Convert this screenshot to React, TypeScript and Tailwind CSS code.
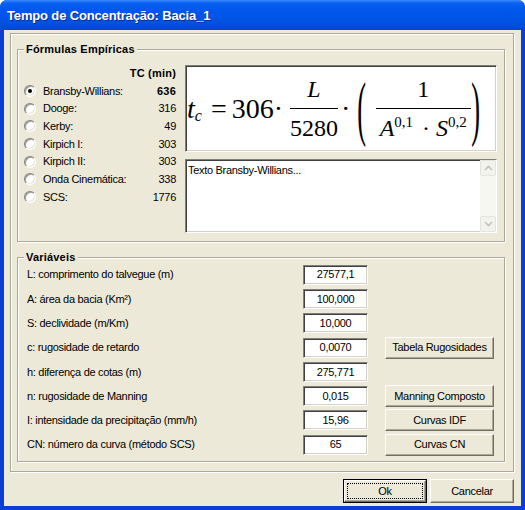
import type { ReactNode } from "react";

const formulas = [
  { name: "Bransby-Willians:", tc: "636", checked: true },
  { name: "Dooge:", tc: "316" },
  { name: "Kerby:", tc: "49" },
  { name: "Kirpich I:", tc: "303" },
  { name: "Kirpich II:", tc: "303" },
  { name: "Onda Cinemática:", tc: "338" },
  { name: "SCS:", tc: "1776" },
];

const variables = [
  { label: "L: comprimento do talvegue (m)", value: "27577,1" },
  { label: "A: área da bacia (Km²)", value: "100,000" },
  { label: "S: declividade (m/Km)", value: "10,000" },
  { label: "c: rugosidade de retardo", value: "0,0070", button: "Tabela Rugosidades" },
  { label: "h: diferença de cotas (m)", value: "275,771" },
  { label: "n: rugosidade de Manning", value: "0,015", button: "Manning Composto" },
  { label: "I: intensidade da precipitação (mm/h)", value: "15,96", button: "Curvas IDF" },
  { label: "CN: número da curva (método SCS)", value: "65", button: "Curvas CN" },
];

const sunken =
  "border border-[#808080] border-r-white border-b-white shadow-[inset_1px_1px_0_#404040,inset_-1px_-1px_0_#d4d0c8] bg-white";
const raised =
  "border border-white border-r-[#716f64] border-b-[#716f64] shadow-[inset_-1px_-1px_0_#aca899] bg-[#ece9d8]";

function GroupBox({ title, className, children }: { title: string; className: string; children: ReactNode }) {
  return (
    <div className={"relative border border-[#aca899] shadow-[inset_1px_1px_0_#fff,1px_1px_0_#fff] " + className}>
      <span className="absolute -top-[8px] left-[6px] bg-[#ece9d8] px-[2px] font-bold leading-[14px] tracking-[0.2px]">
        {title}
      </span>
      {children}
    </div>
  );
}

function Radio({ checked }: { checked?: boolean }) {
  return (
    <span className="flex h-[12px] w-[12px] shrink-0 items-center justify-center rounded-full border border-[#808080] border-r-white border-b-white bg-white shadow-[inset_1px_1px_0_#9d9d97,inset_-1px_-1px_0_#e6e3d6]">
      {checked && <span className="h-[4px] w-[4px] rounded-full bg-black" />}
    </span>
  );
}

function Fraction({ num, den, className }: { num: ReactNode; den: ReactNode; className?: string }) {
  return (
    <span className={"flex flex-col items-center " + (className ?? "")}>
      <span className="pb-[7px] text-[24px] leading-none">{num}</span>
      <span className="h-[1px] w-full bg-black" />
      <span className="pt-[7px] text-[24px] leading-none">{den}</span>
    </span>
  );
}

function Formula() {
  return (
    <div className="flex h-full items-center pl-[1px] font-['Liberation_Serif','Times_New_Roman',serif] tracking-normal text-black">
      <span className="text-[28px] italic leading-none">t</span>
      <span className="relative top-[7px] text-[16px] italic leading-none">c</span>
      <span className="ml-[9px] text-[28px] leading-none">=</span>
      <span className="ml-[5px] text-[28px] leading-none">306</span>
      <span className="text-[28px] leading-none">·</span>
      <Fraction className="ml-[7px]" num={<span className="italic">L</span>} den="5280" />
      <span className="ml-[3px] text-[28px] leading-none">·</span>
      <span className="ml-[8px] inline-block scale-x-[1.2] scale-y-[3.3] text-[22px] leading-none">(</span>
      <Fraction
        className="ml-[10px]"
        num="1"
        den={
          <span className="px-[4px]">
            <span className="italic">A</span>
            <span className="relative -top-[9px] text-[15px]">0,1</span>
            <span className="ml-[9px] mr-[6px]">·</span>
            <span className="italic">S</span>
            <span className="relative -top-[9px] text-[15px]">0,2</span>
          </span>
        }
      />
      <span className="ml-[1px] inline-block scale-x-[1.2] scale-y-[3.3] text-[22px] leading-none">)</span>
    </div>
  );
}

function Chevron({ up }: { up?: boolean }) {
  return (
    <svg width="9" height="6" viewBox="0 0 9 6">
      <path d={up ? "M1 5 L4.5 1.5 L8 5" : "M1 1 L4.5 4.5 L8 1"} fill="none" stroke="#c3c3bb" strokeWidth="1.6" />
    </svg>
  );
}

function ScrollBar() {
  return (
    <div className="flex w-[16px] flex-col justify-between bg-[#f7f7f2]">
      <div className="flex h-[16px] items-center justify-center rounded-[2px] border border-[#e4e3dc] bg-[#f3f3ee]">
        <Chevron up />
      </div>
      <div className="flex h-[16px] items-center justify-center rounded-[2px] border border-[#e4e3dc] bg-[#f3f3ee]">
        <Chevron />
      </div>
    </div>
  );
}

function Button({ children, className }: { children: ReactNode; className: string }) {
  return <div className={"flex items-center justify-center " + raised + " " + className}>{children}</div>;
}

export default function App() {
  return (
    <div className="h-[510px] w-[525px] bg-white font-['Liberation_Sans',Arial,sans-serif] text-[11px] tracking-[-0.3px] text-black">
      <div className="flex h-full flex-col overflow-hidden rounded-t-[7px] bg-[#0a3fd6]">
        <div className="flex h-[30px] shrink-0 items-center bg-[linear-gradient(180deg,#3d8bff_0px,#0a61f2_3px,#0058ec_9px,#0053e3_22px,#0046d2_30px)] pl-[7px] pt-[1px]">
          <span className="text-[13px] font-bold tracking-[-0.15px] text-white [text-shadow:1px_1px_0_#0b2a99]">
            Tempo de Concentração: Bacia_1
          </span>
        </div>

        <div className="mx-[4px] mb-[4px] flex flex-1 flex-col bg-[#ece9d8]">
          <div className="ml-[6px] mt-[3px] h-[439px] w-[504px] border border-[#aca899] pt-[15px] pl-[6px] shadow-[inset_1px_1px_0_#fff,1px_1px_0_#fff]">
            <GroupBox title="Fórmulas Empíricas" className="h-[193px] w-[488px]">
              <div className="flex pl-[6px] pt-[15px]">
                <div className="w-[152px]">
                  <div className="flex h-[17px] items-center justify-end font-bold tracking-[0.2px]">TC (min)</div>
                  {formulas.map((f) => (
                    <div key={f.name} className="flex h-[17.7px] items-center">
                      <Radio checked={f.checked} />
                      <span className="ml-[7px]">{f.name}</span>
                      <span className={"ml-auto " + (f.checked ? "font-bold tracking-[0.2px]" : "")}>{f.tc}</span>
                    </div>
                  ))}
                </div>
                <div className="ml-[9px] w-[312px]">
                  <div className={"h-[87px] " + sunken}>
                    <Formula />
                  </div>
                  <div className={"mt-[7px] flex h-[74px] " + sunken}>
                    <div className="flex-1 pl-[2px] pt-[2px]">Texto Bransby-Willians...</div>
                    <ScrollBar />
                  </div>
                </div>
              </div>
            </GroupBox>

            <GroupBox title="Variáveis" className="mt-[15px] h-[205px] w-[488px]">
              <div className="pl-[9px] pt-[4.5px]">
                {variables.map((v) => (
                  <div key={v.label} className="flex h-[24.3px] items-center">
                    <span className="w-[276px]">{v.label}</span>
                    <div className={"flex h-[20px] w-[65px] items-center justify-center " + sunken}>{v.value}</div>
                    {v.button && <Button className="ml-[17px] h-[22px] w-[109px]">{v.button}</Button>}
                  </div>
                ))}
              </div>
            </GroupBox>
          </div>

          <div className="mt-[7px] flex justify-end gap-[3px] pr-[7px]">
            <div className="flex h-[24px] w-[84px] border border-black">
              <div className={"flex flex-1 p-[2px] " + raised}>
                <div className="flex flex-1 items-center justify-center border border-dotted border-black">Ok</div>
              </div>
            </div>
            <Button className="h-[24px] w-[84px]">Cancelar</Button>
          </div>
        </div>
      </div>
    </div>
  );
}
